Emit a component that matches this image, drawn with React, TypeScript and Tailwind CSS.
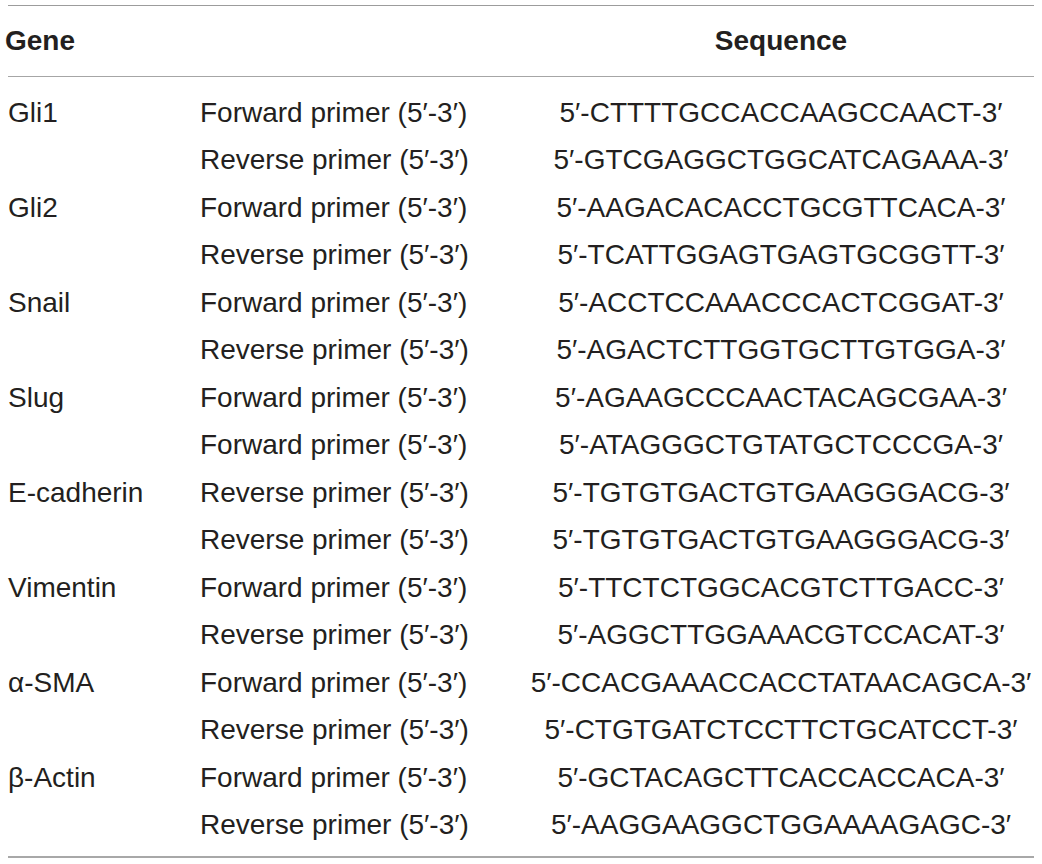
const rows: { gene: string; primer: string; seq: string }[] = [
	{ gene: "Gli1", primer: "Forward primer (5′-3′)", seq: "5′-CTTTTGCCACCAAGCCAACT-3′" },
	{ gene: "", primer: "Reverse primer (5′-3′)", seq: "5′-GTCGAGGCTGGCATCAGAAA-3′" },
	{ gene: "Gli2", primer: "Forward primer (5′-3′)", seq: "5′-AAGACACACCTGCGTTCACA-3′" },
	{ gene: "", primer: "Reverse primer (5′-3′)", seq: "5′-TCATTGGAGTGAGTGCGGTT-3′" },
	{ gene: "Snail", primer: "Forward primer (5′-3′)", seq: "5′-ACCTCCAAACCCACTCGGAT-3′" },
	{ gene: "", primer: "Reverse primer (5′-3′)", seq: "5′-AGACTCTTGGTGCTTGTGGA-3′" },
	{ gene: "Slug", primer: "Forward primer (5′-3′)", seq: "5′-AGAAGCCCAACTACAGCGAA-3′" },
	{ gene: "", primer: "Forward primer (5′-3′)", seq: "5′-ATAGGGCTGTATGCTCCCGA-3′" },
	{ gene: "E-cadherin", primer: "Reverse primer (5′-3′)", seq: "5′-TGTGTGACTGTGAAGGGACG-3′" },
	{ gene: "", primer: "Reverse primer (5′-3′)", seq: "5′-TGTGTGACTGTGAAGGGACG-3′" },
	{ gene: "Vimentin", primer: "Forward primer (5′-3′)", seq: "5′-TTCTCTGGCACGTCTTGACC-3′" },
	{ gene: "", primer: "Reverse primer (5′-3′)", seq: "5′-AGGCTTGGAAACGTCCACAT-3′" },
	{ gene: "α-SMA", primer: "Forward primer (5′-3′)", seq: "5′-CCACGAAACCACCTATAACAGCA-3′" },
	{ gene: "", primer: "Reverse primer (5′-3′)", seq: "5′-CTGTGATCTCCTTCTGCATCCT-3′" },
	{ gene: "β-Actin", primer: "Forward primer (5′-3′)", seq: "5′-GCTACAGCTTCACCACCACA-3′" },
	{ gene: "", primer: "Reverse primer (5′-3′)", seq: "5′-AAGGAAGGCTGGAAAAGAGC-3′" },
];

const App = () => {
	return (
		<div className="h-[864px] w-[1042px] bg-white px-[8px] pt-[5px] font-['Liberation_Sans',Arial,sans-serif] text-[28px] text-[#231f20]">
			<div className="border-t-[1.5px] border-b-[2px] border-t-[#9c9c9c] border-b-[#a8a8a8]">
				<div className="grid h-[71px] grid-cols-[192px_328px_1fr] items-center border-b border-[#a6a6a6] font-bold">
					<div className="-ml-[3px]">Gene</div>
					<div />
					<div className="text-center">Sequence</div>
				</div>
				<div className="pt-[12px] pb-[7px]">
					{rows.map((r, i) => (
						<div
							key={i}
							className="grid h-[47.5px] grid-cols-[192px_328px_1fr] items-center whitespace-nowrap leading-none"
						>
							<div>{r.gene}</div>
							<div>{r.primer}</div>
							<div className="text-center">{r.seq}</div>
						</div>
					))}
				</div>
			</div>
		</div>
	);
};

export default App;
